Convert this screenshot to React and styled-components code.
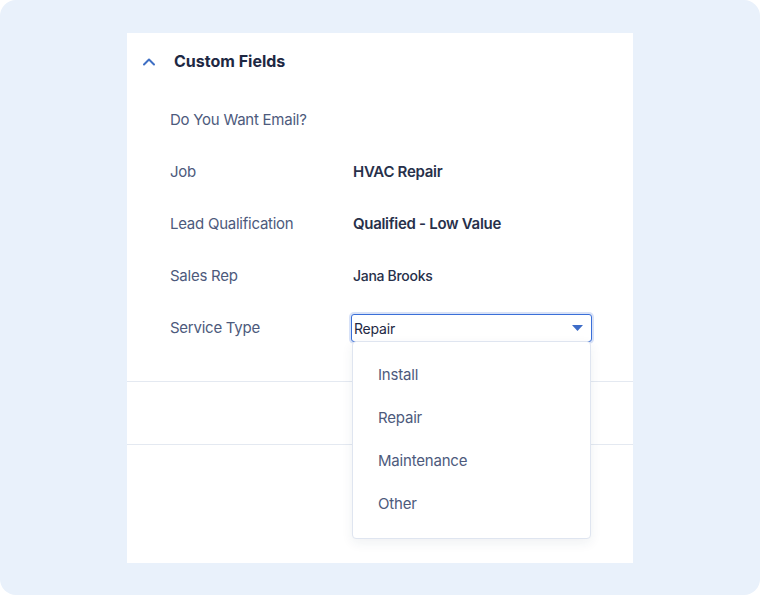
import React from 'react'
import styled, { createGlobalStyle } from 'styled-components'

const GlobalStyle = createGlobalStyle`
  html, body {
    margin: 0;
    padding: 0;
    background: #fff;
  }
  * {
    box-sizing: border-box;
  }
`

const Frame = styled.div`
  width: 760px;
  height: 595px;
  background: #e9f1fb;
  border-radius: 16px;
  display: flex;
  justify-content: center;
  padding-top: 33px;
  font-family: Inter, 'Noto Sans', sans-serif;
`

const Panel = styled.div`
  width: 506px;
  height: 530px;
  background: #fff;
  display: flex;
  flex-direction: column;
`

const Section = styled.section`
  border-bottom: ${props => (props.last ? 'none' : '1px solid #e4e9f1')};
  height: ${props => props.height}px;
  flex-shrink: 0;
`

const Header = styled.button`
  display: flex;
  align-items: center;
  gap: 18px;
  height: 56px;
  padding: 0 0 0 15px;
  border: none;
  background: none;
  font-family: inherit;
  font-size: 16px;
  font-weight: 700;
  color: #1e2843;
  cursor: pointer;
`

const Fields = styled.div`
  padding: 4px 0 28px 43px;
`

const Row = styled.div`
  display: grid;
  grid-template-columns: 181px 241px;
  align-items: center;
  height: 52px;
`

const Label = styled.div`
  font-size: 15px;
  color: #4d5a7c;
  letter-spacing: -0.25px;
`

const Value = styled.div`
  padding-left: 2px;
  font-size: ${props => (props.small ? 14 : 15)}px;
  font-weight: ${props => (props.small ? 500 : 600)};
  color: #27304a;
  letter-spacing: -0.3px;
`

const SelectWrap = styled.div`
  position: relative;
  height: 28px;
  margin-top: 2px;
`

const SelectBox = styled.div`
  display: flex;
  align-items: center;
  justify-content: space-between;
  height: 28px;
  padding: 0 8px 0 2px;
  border: 1px solid #3a6fd8;
  border-radius: 3px;
  box-shadow: 0 0 0 2px rgba(59, 111, 216, 0.2);
  font-size: 14px;
  color: #1e2843;
  letter-spacing: -0.2px;
  background: #fff;
`

const Menu = styled.ul`
  position: absolute;
  top: 27px;
  left: 1px;
  width: 239px;
  margin: 0;
  padding: 11px 0 13px;
  list-style: none;
  background: #fff;
  border: 1px solid #dfe5f0;
  border-radius: 4px;
  box-shadow: 0 4px 12px rgba(30, 50, 90, 0.07);
  z-index: 2;
`

const Option = styled.li`
  height: 43px;
  display: flex;
  align-items: center;
  padding-left: 25px;
  font-size: 15px;
  color: #4d5a7c;
  letter-spacing: -0.2px;
`

const Chevron = () => (
  <svg width="14" height="9" viewBox="0 0 14 9" fill="none">
    <path
      d="M2 7.5 L7 2.5 L12 7.5"
      stroke="#3f6fc4"
      strokeWidth="2"
      strokeLinecap="round"
      strokeLinejoin="round"
    />
  </svg>
)

const Caret = () => (
  <svg width="11" height="6" viewBox="0 0 11 6">
    <path d="M0 0 H11 L5.5 6 Z" fill="#3d6cc7" />
  </svg>
)

const fields = [
  { label: 'Do You Want Email?' },
  { label: 'Job', value: 'HVAC Repair' },
  { label: 'Lead Qualification', value: 'Qualified - Low Value' },
  { label: 'Sales Rep', value: 'Jana Brooks', small: true },
]

const options = ['Install', 'Repair', 'Maintenance', 'Other']

const App = () => (
  <>
    <GlobalStyle />
    <Frame>
      <Panel>
        <Section height={349}>
          <Header>
            <Chevron />
            Custom Fields
          </Header>
          <Fields>
            {fields.map(({ label, value, small }) => (
              <Row key={label}>
                <Label>{label}</Label>
                {value ? <Value small={small}>{value}</Value> : <span />}
              </Row>
            ))}
            <Row>
              <Label>Service Type</Label>
              <SelectWrap>
                <SelectBox>
                  Repair
                  <Caret />
                </SelectBox>
                <Menu>
                  {options.map(o => (
                    <Option key={o}>{o}</Option>
                  ))}
                </Menu>
              </SelectWrap>
            </Row>
          </Fields>
        </Section>
        <Section height={63} />
        <Section last height={118} />
      </Panel>
    </Frame>
  </>
)

export default App
